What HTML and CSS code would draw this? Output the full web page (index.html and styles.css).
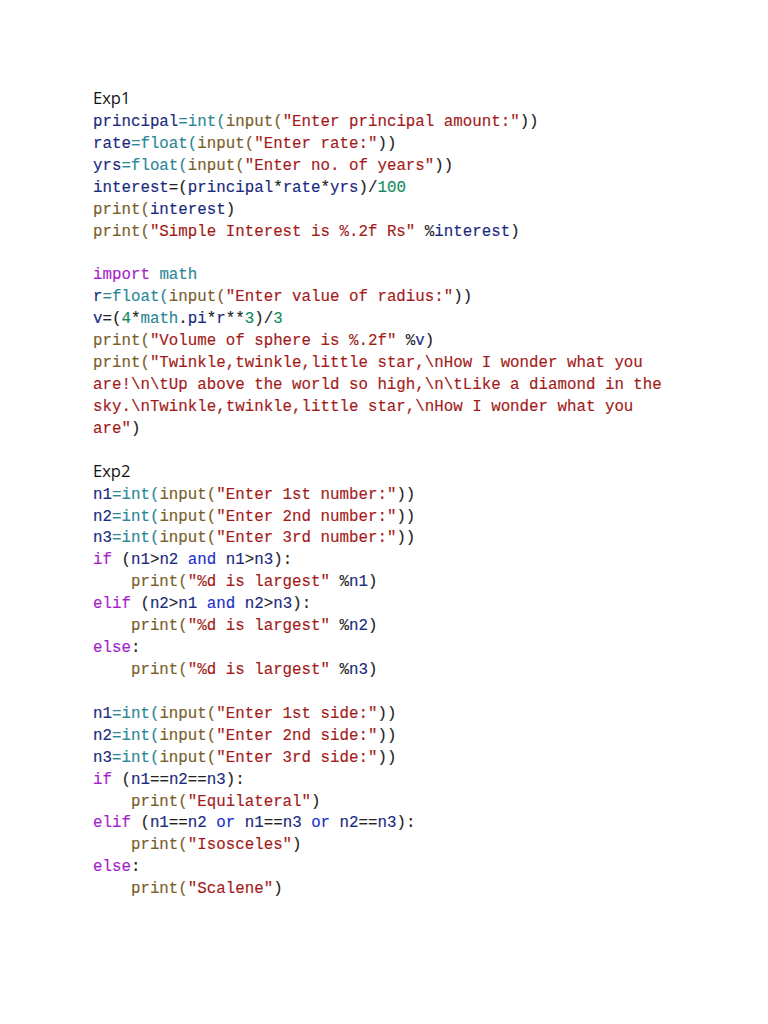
FILE: index.html
```html
<!DOCTYPE html>
<html>
<head>
<meta charset="utf-8">
<link rel="stylesheet" href="styles.css">
</head>
<body>
<main class="page">
<pre class="code"><span class="h">Exp1</span>
<span class="v">principal</span><span class="t">=int(</span><span class="f">input(</span><span class="s">"Enter principal amount:"</span>))
<span class="v">rate</span><span class="t">=float(</span><span class="f">input(</span><span class="s">"Enter rate:"</span>))
<span class="v">yrs</span><span class="t">=float(</span><span class="f">input(</span><span class="s">"Enter no. of years"</span>))
<span class="v">interest</span>=(<span class="v">principal</span>*<span class="v">rate</span>*<span class="v">yrs</span>)/<span class="n">100</span>
<span class="f">print(</span><span class="v">interest</span>)
<span class="f">print(</span><span class="s">"Simple Interest is %.2f Rs"</span> %<span class="v">interest</span>)

<span class="k">import</span> <span class="t">math</span>
<span class="v">r</span><span class="t">=float(</span><span class="f">input(</span><span class="s">"Enter value of radius:"</span>))
<span class="v">v</span>=(<span class="n">4</span>*<span class="t">math</span>.<span class="v">pi</span>*<span class="v">r</span>**<span class="n">3</span>)/<span class="n">3</span>
<span class="f">print(</span><span class="s">"Volume of sphere is %.2f"</span> %<span class="v">v</span>)
<span class="f">print(</span><span class="s">"Twinkle,twinkle,little star,\nHow I wonder what you</span>
<span class="s">are!\n\tUp above the world so high,\n\tLike a diamond in the</span>
<span class="s">sky.\nTwinkle,twinkle,little star,\nHow I wonder what you</span>
<span class="s">are"</span>)

<span class="h">Exp2</span>
<span class="v">n1</span><span class="t">=int(</span><span class="f">input(</span><span class="s">"Enter 1st number:"</span>))
<span class="v">n2</span><span class="t">=int(</span><span class="f">input(</span><span class="s">"Enter 2nd number:"</span>))
<span class="v">n3</span><span class="t">=int(</span><span class="f">input(</span><span class="s">"Enter 3rd number:"</span>))
<span class="k">if</span> (<span class="v">n1</span>&gt;<span class="v">n2</span> <span class="b">and</span> <span class="v">n1</span>&gt;<span class="v">n3</span>):
    <span class="f">print(</span><span class="s">"%d is largest"</span> %<span class="v">n1</span>)
<span class="k">elif</span> (<span class="v">n2</span>&gt;<span class="v">n1</span> <span class="b">and</span> <span class="v">n2</span>&gt;<span class="v">n3</span>):
    <span class="f">print(</span><span class="s">"%d is largest"</span> %<span class="v">n2</span>)
<span class="k">else</span>:
    <span class="f">print(</span><span class="s">"%d is largest"</span> %<span class="v">n3</span>)

<span class="v">n1</span><span class="t">=int(</span><span class="f">input(</span><span class="s">"Enter 1st side:"</span>))
<span class="v">n2</span><span class="t">=int(</span><span class="f">input(</span><span class="s">"Enter 2nd side:"</span>))
<span class="v">n3</span><span class="t">=int(</span><span class="f">input(</span><span class="s">"Enter 3rd side:"</span>))
<span class="k">if</span> (<span class="v">n1</span>==<span class="v">n2</span>==<span class="v">n3</span>):
    <span class="f">print(</span><span class="s">"Equilateral"</span>)
<span class="k">elif</span> (<span class="v">n1</span>==<span class="v">n2</span> <span class="b">or</span> <span class="v">n1</span>==<span class="v">n3</span> <span class="b">or</span> <span class="v">n2</span>==<span class="v">n3</span>):
    <span class="f">print(</span><span class="s">"Isosceles"</span>)
<span class="k">else</span>:
    <span class="f">print(</span><span class="s">"Scalene"</span>)</pre>
</main>
</body>
</html>
```

FILE: styles.css
```css
html, body {
  margin: 0;
  padding: 0;
  background: #ffffff;
}

.page {
  padding: 90px 0 0 93px;
}

.code {
  margin: 0;
  font-family: "Liberation Mono", "DejaVu Sans Mono", monospace;
  font-size: 15.8px;
  line-height: 21.92px;
  color: #222222;
  white-space: pre;
  -webkit-text-stroke: 0.15px currentColor;
}

.h {
  font-family: "Open Sans", "Liberation Sans", sans-serif;
  font-size: 16.5px;
  line-height: 1;
  color: #111111;
  -webkit-text-stroke: 0;
}

.v { color: #1a2a80; }
.t { color: #2b8797; }
.f { color: #7a5e2a; }
.s { color: #a31a1a; }
.n { color: #118a5e; }
.k { color: #a51fc8; }
.b { color: #1a2fd0; }
```
